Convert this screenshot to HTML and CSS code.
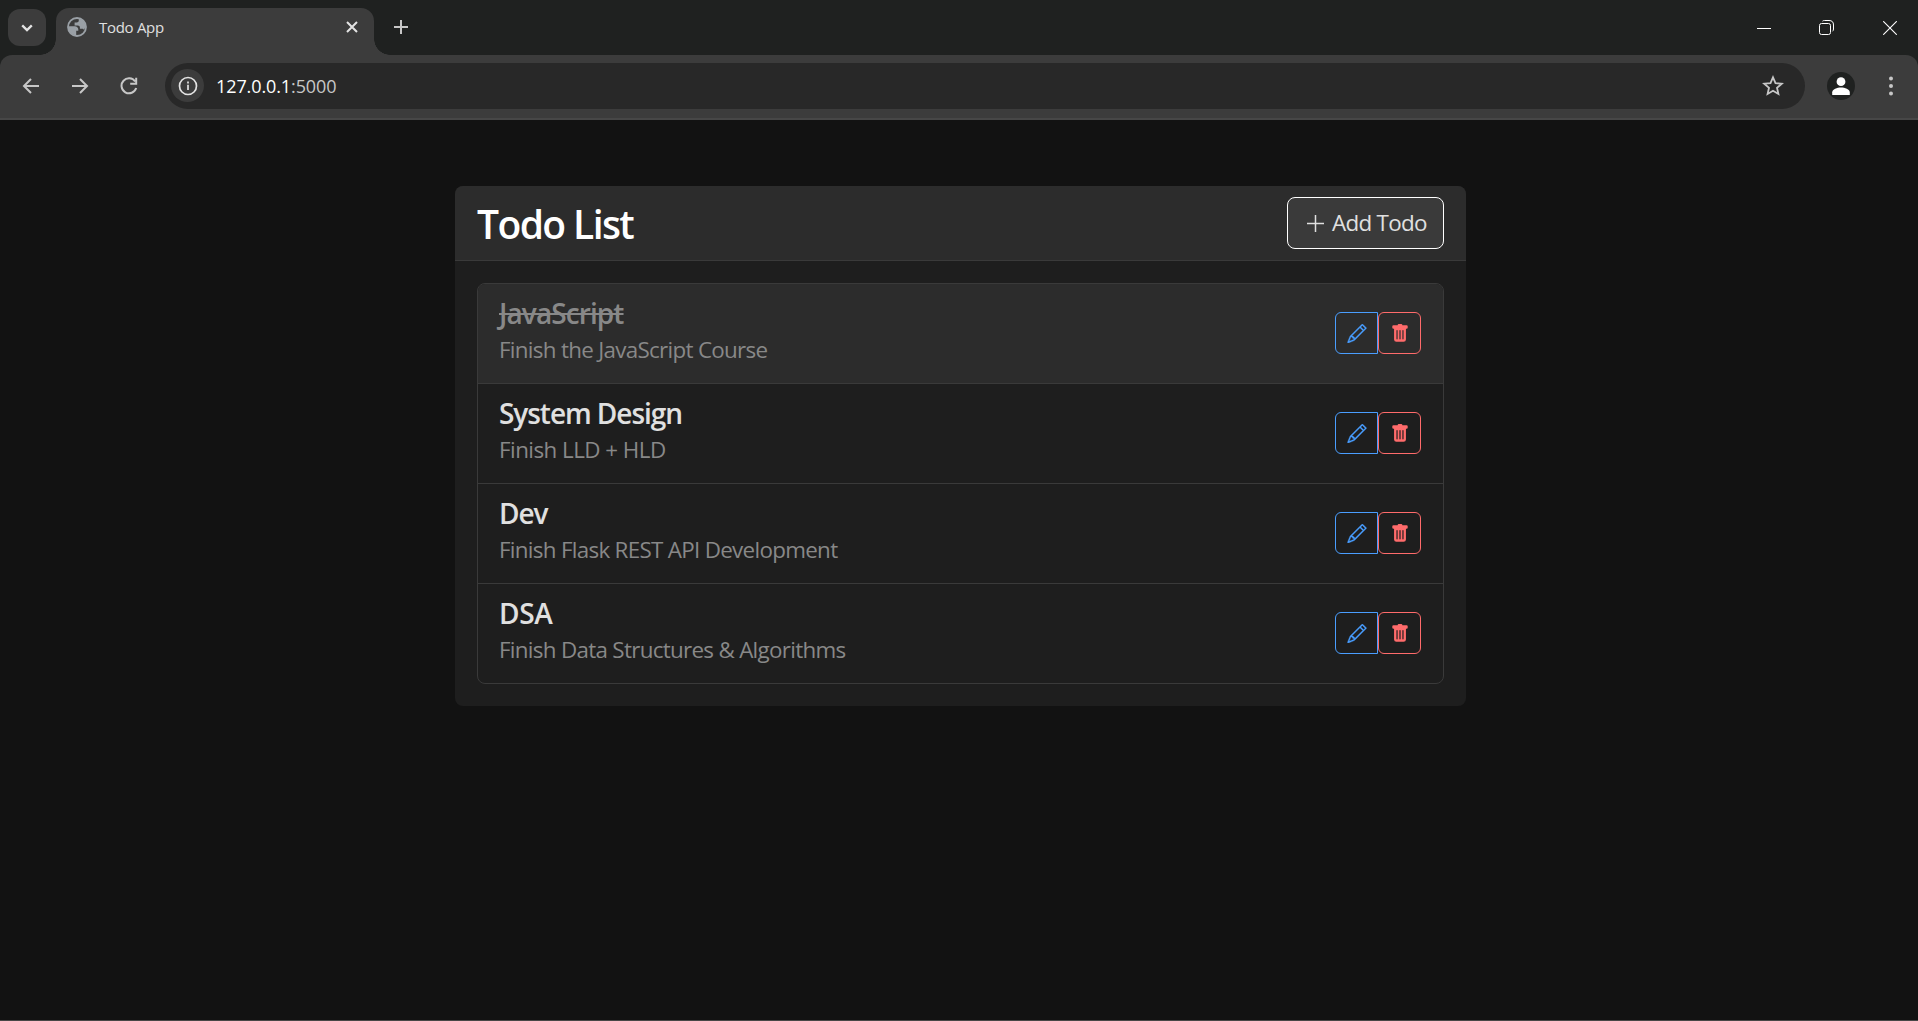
FILE: index.html
```html
<!DOCTYPE html>
<html lang="en">
<head>
<meta charset="utf-8">
<title>Todo App</title>
<link rel="stylesheet" href="styles.css">
</head>
<body>
<svg class="defs" aria-hidden="true">
  <symbol id="pencil" viewBox="0 0 16 16"><path d="M12.146.146a.5.5 0 0 1 .708 0l3 3a.5.5 0 0 1 0 .708l-10 10a.5.5 0 0 1-.168.11l-5 2a.5.5 0 0 1-.65-.65l2-5a.5.5 0 0 1 .11-.168zM11.207 2.5 13.5 4.793 14.793 3.5 12.5 1.207zm1.586 3L10.5 3.207 4 9.707V10h.5a.5.5 0 0 1 .5.5v.5h.5a.5.5 0 0 1 .5.5v.5h.293zm-9.761 5.175-.106.106-1.528 3.821 3.821-1.528.106-.106A.5.5 0 0 1 5 12.5V12h-.5a.5.5 0 0 1-.5-.5V11h-.5a.5.5 0 0 1-.468-.325"/></symbol>
  <symbol id="trash" viewBox="0 0 16 16"><path d="M2.5 1a1 1 0 0 0-1 1v1a1 1 0 0 0 1 1H3v9a2 2 0 0 0 2 2h6a2 2 0 0 0 2-2V4h.5a1 1 0 0 0 1-1V2a1 1 0 0 0-1-1H10a1 1 0 0 0-1-1H7a1 1 0 0 0-1 1zm3 4a.5.5 0 0 1 .5.5v7a.5.5 0 0 1-1 0v-7a.5.5 0 0 1 .5-.5M8 5a.5.5 0 0 1 .5.5v7a.5.5 0 0 1-1 0v-7A.5.5 0 0 1 8 5m3 .5v7a.5.5 0 0 1-1 0v-7a.5.5 0 0 1 1 0"/></symbol>
</svg>
<header class="browser">
  <div class="tabstrip">
    <button class="tab-search"><svg width="12" height="8" viewBox="0 0 12 8"><path d="M1.2 1.4 6 6.1l4.800-4.700" fill="none" stroke="#e3e3e3" stroke-width="2.300"/></svg></button>
    <div class="tab">
      <svg class="globe" width="20" height="20" viewBox="0 0 20 20"><circle cx="10" cy="10" r="9" fill="none" stroke="#9aa0a6" stroke-width="1.800"/><path fill="#9aa0a6" d="M1.500 9.300h6.300c2 0 3.500 1.300 3.500 3.200v1.200H9.200v4.600C4 18.500.8 14 1.500 9.300zM11.800 1.800 11.800 3.500c0 1.200-.9 2-2.100 2H7.600v3h3.200c1.300 0 2.100.8 2.100 2v1.200h2.200c.9 0 1.600.5 1.900 1.300C20.300 8 17 2.500 11.800 1.800z"/></svg>
      <span class="tab-title">Todo App</span>
      <svg class="tab-close" width="12" height="12" viewBox="0 0 12 12"><path d="m1 1 10 10M11 1 1 11" stroke="#e3e3e3" stroke-width="2"/></svg>
    </div>
    <svg class="new-tab" width="14" height="14" viewBox="0 0 14 14"><path d="M7 0v14M0 7h14" stroke="#c7c7c7" stroke-width="2"/></svg>
    <div class="window-buttons">
      <svg width="14" height="14" viewBox="0 0 14 14"><path d="M0 7.500h14" stroke="#fff"/></svg>
      <svg width="15" height="15" viewBox="0 0 15 15" fill="none" stroke="#fff"><rect x=".5" y="3.500" width="11" height="11" rx="2"/><path d="M3.500 1.200C4 .7 4.500.5 5.500.5H10c3 0 4.500 1.500 4.500 4.500v4c0 1-.3 1.800-1 2.300"/></svg>
      <svg width="14" height="14" viewBox="0 0 14 14"><path d="m.2.2 13.600 13.600M13.800.2.2 13.800" stroke="#fff" stroke-width="1.100"/></svg>
    </div>
  </div>
  <div class="toolbar">
    <svg class="nav" width="18" height="16" viewBox="0 0 18 16"><path d="M17 8H2M9 1 2 8l7 7" fill="none" stroke="#c7c7c7" stroke-width="2"/></svg>
    <svg class="nav" width="18" height="16" viewBox="0 0 18 16"><path d="M1 8h15M9 1l7 7-7 7" fill="none" stroke="#c7c7c7" stroke-width="2"/></svg>
    <svg class="nav reload" width="18" height="18" viewBox="0 0 18 18"><path d="M15.200 4.500A7.500 7.500 0 1 0 16.200 11M16.200.8v6h-6" fill="none" stroke="#c7c7c7" stroke-width="2"/></svg>
    <div class="address">
      <span class="site-info"><svg width="20" height="20" viewBox="0 0 20 20"><circle cx="10" cy="10" r="8.500" fill="none" stroke="#e3e3e3" stroke-width="1.700"/><path d="M10 8.700v5.300M10 5.500v2" stroke="#e3e3e3" stroke-width="1.700"/></svg></span>
      <span class="url">127.0.0.1<span class="port">:5000</span></span>
      <svg class="star" width="22" height="21" viewBox="0 0 22 21"><path d="m11 2.300 2.500 5.800 6.300.6-4.800 4.100 1.400 6.100L11 15.700l-5.400 3.200L7 12.800 2.200 8.700l6.300-.6z" fill="none" stroke="#c7c7c7" stroke-width="1.800"/></svg>
    </div>
    <svg class="profile" width="28" height="28" viewBox="0 0 28 28"><circle cx="14" cy="14" r="14" fill="#1f2120"/><circle cx="14" cy="9.700" r="4.400" fill="#fff"/><path d="M5.200 23v-2.500c0-3.300 5-5 8.800-5s8.800 1.700 8.800 5V23z" fill="#fff"/></svg>
    <svg class="menu" width="4" height="20" viewBox="0 0 4 20" fill="#c7c7c7"><circle cx="2" cy="2.500" r="2"/><circle cx="2" cy="10" r="2"/><circle cx="2" cy="17.500" r="2"/></svg>
  </div>
</header>
<main class="page">
  <section class="card">
    <div class="card-header">
      <h1>Todo List</h1>
      <button class="add"><svg width="17" height="17" viewBox="0 0 17 17"><path d="M8.500 0v17M0 8.500h17" stroke="#e0e0e0" stroke-width="1.500"/></svg><span>Add Todo</span></button>
    </div>
    <ul class="list">
      <li class="item done"><div><h2 class="t1">JavaScript</h2><p class="d1">Finish the JavaScript Course</p></div><div class="actions"><button class="edit"><svg><use href="#pencil"/></svg></button><button class="delete"><svg><use href="#trash"/></svg></button></div></li>
      <li class="item"><div><h2 class="t2">System Design</h2><p class="d2">Finish LLD + HLD</p></div><div class="actions"><button class="edit"><svg><use href="#pencil"/></svg></button><button class="delete"><svg><use href="#trash"/></svg></button></div></li>
      <li class="item"><div><h2 class="t3">Dev</h2><p class="d3">Finish Flask REST API Development</p></div><div class="actions"><button class="edit"><svg><use href="#pencil"/></svg></button><button class="delete"><svg><use href="#trash"/></svg></button></div></li>
      <li class="item"><div><h2 class="t4">DSA</h2><p class="d4">Finish Data Structures &amp; Algorithms</p></div><div class="actions"><button class="edit"><svg><use href="#pencil"/></svg></button><button class="delete"><svg><use href="#trash"/></svg></button></div></li>
    </ul>
  </section>
</main>
</body>
</html>
```
FILE: styles.css
```css
* { box-sizing: border-box; }
html, body { height: 100%; }
body { margin: 0; display: flex; flex-direction: column; background: #121212; color: #e0e0e0; font-family: "Segoe UI", "Open Sans", "Noto Sans", sans-serif; overflow: hidden; }
h1, h2, p, ul { margin: 0; padding: 0; }
button { font: inherit; color: inherit; padding: 0; border: 0; background: none; display: flex; align-items: center; justify-content: center; }
svg { display: block; flex: none; }
.defs { position: absolute; width: 0; height: 0; }

.browser { background: #1f2120; flex: none; }
.tabstrip { height: 55px; display: flex; align-items: flex-start; }
.tab-search { width: 38px; height: 37px; margin: 9px 0 0 8px; border-radius: 12px; background: #3c3c3c; }
.tab { position: relative; width: 318px; height: 47px; margin: 8px 0 0 10px; padding: 0 16px 9px 11px; border-radius: 13px 13px 0 0; background: #3c3c3c; display: flex; align-items: center; }
.tab::before, .tab::after { content: ""; position: absolute; bottom: 0; width: 16px; height: 16px; }
.tab::before { left: -16px; background: radial-gradient(circle at 0 0, transparent 15.500px, #3c3c3c 16px); }
.tab::after { right: -16px; background: radial-gradient(circle at 100% 0, transparent 15.500px, #3c3c3c 16px); }
.tab-title { flex: 1; margin-left: 12px; font-size: 15px; line-height: 20px; letter-spacing: -0.3px; }
.new-tab { margin: 20px 0 0 20px; }
.window-buttons { margin: 20px 21px 0 auto; display: flex; gap: 49px; align-items: center; }
.window-buttons svg:first-child { margin-right: -1px; }

.toolbar { height: 65px; padding: 0 25px 2px 22px; display: flex; align-items: center; background: #3c3c3c; border-bottom: 2px solid #474747; border-radius: 12px 12px 0 0; }
.nav { margin-right: 31px; }
.reload { margin-right: 27px; }
.address { flex: 1; height: 46px; padding: 0 21px 0 6px; border-radius: 23px; background: #282828; display: flex; align-items: center; }
.site-info { width: 33px; height: 33px; border-radius: 50%; background: #3c3c3c; display: flex; align-items: center; justify-content: center; }
.url { flex: 1; margin-left: 12px; font-size: 18px; letter-spacing: -0.100px; color: #fff; }
.port { color: #c7c7c7; }
.profile { margin-left: 22px; }
.menu { margin-left: 34px; }

.page { flex: 1; padding-top: 66px; border-bottom: 1px solid #474747; }
.card { width: 1011px; height: 520px; margin: 0 auto 0 455px; background: #1e1e1e; border-radius: 8px; overflow: hidden; }
.card-header { height: 75px; padding: 0 22px; display: flex; align-items: center; justify-content: space-between; background: #2c2c2c; border-bottom: 1px solid #3a3a3a; }
h1 { padding-top: 2px; font-size: 39px; font-weight: 600; line-height: 48px; letter-spacing: -1.600px; color: #fff; }
.add { width: 157px; height: 52px; padding-left: 19px; justify-content: flex-start; gap: 8px; border: 1px solid #fff; border-radius: 8px; background: #3a3a3a; font-size: 22.400px; letter-spacing: -0.700px; }
.add span { margin-top: -1px; }
.list { margin: 22px; border: 1px solid #3a3a3a; border-radius: 8px; overflow: hidden; list-style: none; }
.item { height: 100px; padding: 11px 22px 0 21px; display: flex; justify-content: space-between; border-bottom: 1px solid #3a3a3a; }
.item:last-child { height: 99px; border-bottom: 0; }
h2 { width: max-content; font-size: 28px; font-weight: 600; line-height: 36px; letter-spacing: -1.050px; }
.t1 { letter-spacing: -0.900px; }
.t4 { letter-spacing: -0.300px; }
p { width: max-content; font-size: 22.400px; line-height: 38px; letter-spacing: -0.700px; color: #888; }
.d2 { letter-spacing: -0.540px; }
.done { background: #2c2c2c; }
.done h2 { color: #888; text-decoration: line-through; text-decoration-thickness: 2px; }
.actions { display: flex; margin-top: 17px; }
.actions button { width: 43px; height: 42px; border: 1px solid; }
.actions svg { width: 20px; height: 19px; fill: currentColor; }
.edit svg { stroke: currentColor; stroke-width: 0.300px; }
.edit { color: #4a9eff; border-radius: 6px 0 0 6px; }
.delete { color: #ff6b6b; border-radius: 6px; }
```
